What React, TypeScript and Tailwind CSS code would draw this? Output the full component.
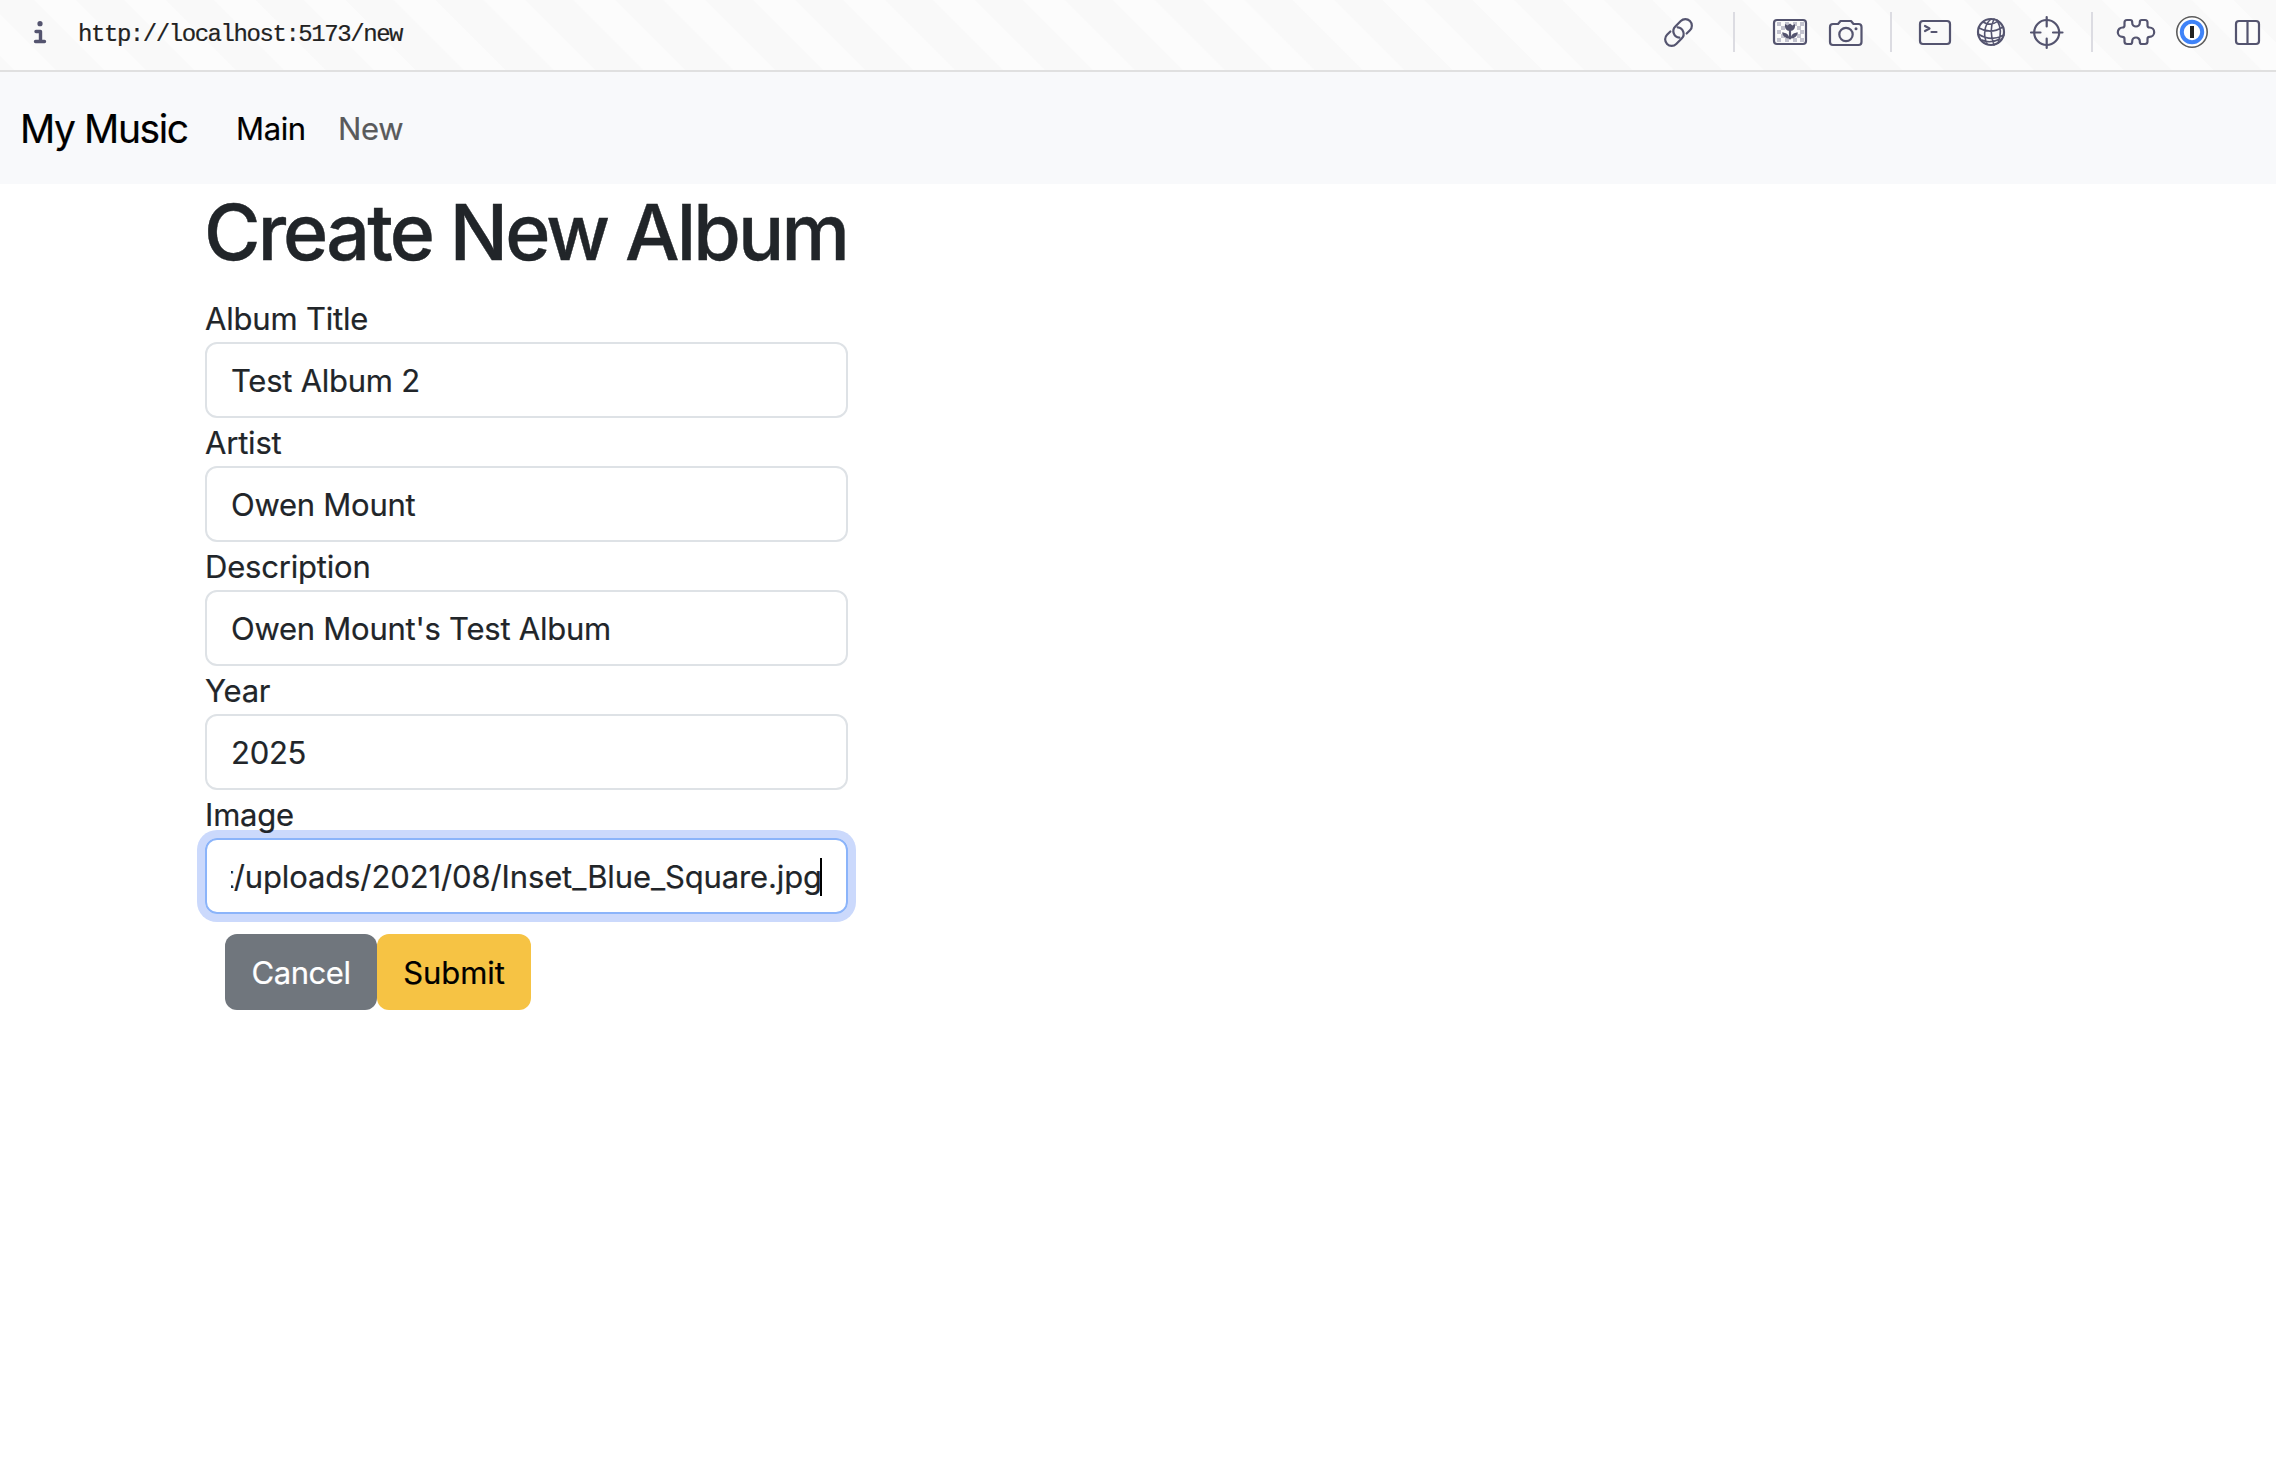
import React from "react";

const ink = "#54546f";

function Cell({ children }: { children: React.ReactNode }) {
  return (
    <svg width="56" height="70" viewBox="0 0 56 70" fill="none" stroke={ink} strokeWidth="2.2" strokeLinecap="round" strokeLinejoin="round" className="shrink-0">
      {children}
    </svg>
  );
}

const LinkIcon = () => (
  <Cell>
    <g transform="translate(28.5 32.5) rotate(-45)">
      <path d="M5 6.500H9.700A6.500 6.500 0 0 0 9.700-6.500H2A6.500 6.500 0 0 0-3 4.200" />
      <path d="M-5-6.500H-9.700A6.500 6.500 0 0 0-9.700 6.500H-2A6.500 6.500 0 0 0 3-4.200" />
    </g>
  </Cell>
);

const PictureIcon = () => (
  <Cell>
    <g fill="#c3c3cf" stroke="none">
      <path d="M15 22h4v4h-4zM23 22h4v4h-4zM31 22h4v4h-4zM38 22h4v4h-4zM19 26h4v4h-4zM35 26h4v4h-4zM15 30h4v4h-4zM38 30h4v4h-4zM19 34h4v4h-4zM35 34h4v4h-4zM15 38h4v4h-4zM23 38h4v4h-4zM31 38h4v4h-4zM38 38h4v4h-4z" />
    </g>
    <rect x="12" y="20" width="32" height="24" rx="3" />
    <path d="M23 24l2.500 1.500 2.500-2 2.500 2 2.500-1.500c.5 4-1 7-5 7s-5.500-3-5-7z" fill={ink} stroke="none" />
    <path d="M28 30v8.500" />
    <path d="M27.500 38.500c-4 0-6.500-2-7.500-6 4 0 7 2 7.500 6zM28.500 38.500c4 0 6.500-2 7.500-6-4 0-7 2-7.500 6z" fill={ink} stroke="none" />
  </Cell>
);

const CameraIcon = () => (
  <Cell>
    <path d="M15 24h5l2.500-3h10.500l2.500 3h5a3 3 0 0 1 3 3v15a3 3 0 0 1-3 3h-25.500a3 3 0 0 1-3-3v-15a3 3 0 0 1 3-3z" />
    <circle cx="28" cy="34.500" r="6.700" />
    <circle cx="38" cy="28.700" r="1.500" fill={ink} stroke="none" />
  </Cell>
);

const TerminalIcon = () => (
  <Cell>
    <rect x="13" y="21" width="30" height="23" rx="3" />
    <path d="M18 26l4.500 2.500L18 31M24.500 32h5" />
  </Cell>
);

const GlobeIcon = () => (
  <Cell>
    <circle cx="28" cy="32" r="13" />
    <path strokeWidth="1.600" d="M28 19c-7 6-8 16-4 25M31 19c-4 8-3 18 0 26M34 20c4 7 5 14 1 23M16 28c7 4 16 4 24-1M15 34c8 5 17 6 26 1M20 22c5 3 10 3 15-1M19 40c6 3 12 2 18-1" />
  </Cell>
);

const TargetIcon = () => (
  <Cell>
    <circle cx="27.700" cy="32.500" r="12.500" />
    <path d="M27.700 17v9.500M27.700 38.500v9.500M12 32.500h9.500M34 32.500h9.500" />
  </Cell>
);

const PuzzleIcon = () => (
  <Cell>
    <path d="M19 20h3.200a2 2 0 0 1 2 2v.7a3.800 3.800 0 0 0 7.600 0v-.7a2 2 0 0 1 2-2h3.200a2.500 2.500 0 0 1 2.500 2.500v3a2 2 0 0 0 2 2a4.700 4.700 0 0 1 0 9.400a2 2 0 0 0-2 2v2.600a2.500 2.500 0 0 1-2.500 2.500h-3.200a2 2 0 0 1-2-2v-.7a3.800 3.800 0 0 0-7.600 0v.7a2 2 0 0 1-2 2h-3.200a2.500 2.500 0 0 1-2.500-2.500v-2.600a2 2 0 0 0-2-2a4.700 4.700 0 0 1 0-9.400a2 2 0 0 0 2-2v-3a2.500 2.500 0 0 1 2.500-2.500z" />
  </Cell>
);

const PasswordIcon = () => (
  <Cell>
    <circle cx="28" cy="32" r="15.200" stroke="#5c5c5c" strokeWidth="1.600" fill="#fff" />
    <circle cx="28" cy="32" r="10.200" stroke="#3f83f8" strokeWidth="4" />
    <rect x="26" y="26" width="4" height="12" fill="#222" stroke="none" />
  </Cell>
);

const PanelIcon = () => (
  <Cell>
    <rect x="16" y="21" width="23" height="23" rx="3" />
    <path d="M27.500 21v23" />
  </Cell>
);

const Divider = ({ className }: { className: string }) => <div className={`h-10 w-0.5 bg-[#dcdce2] ${className}`} />;

const labelText = "h-12 text-[31px] leading-[50px] tracking-[-0.2px]";
const inputBase = "flex h-[76px] w-[643px] items-center overflow-hidden rounded-[12px] border-2 px-6 pt-0.5 text-[31px] leading-[48px]";

function Field({ label, value }: { label: string; value: string }) {
  return (
    <div>
      <div className={labelText}>{label}</div>
      <div className={`${inputBase} border-[#dee2e6] tracking-[-0.25px]`}>{value}</div>
    </div>
  );
}

export default function App() {
  return (
    <div className="h-[1476px] w-[2276px] overflow-hidden bg-white font-['Inter',sans-serif] text-[#212529] [-webkit-text-stroke:0.2px_currentColor]">
      <header className="flex h-[72px] items-start border-b-2 border-[#e0e0e0] bg-[repeating-linear-gradient(45deg,#f9f9f9_0px,#f9f9f9_9.5px,#fcfcfc_10.5px,#fcfcfc_39px,#f9f9f9_40px,#f9f9f9_63.57px)]">
        <svg width="78" height="70" viewBox="0 0 78 70" fill="none" stroke={ink} strokeWidth="3.400" strokeLinecap="round" strokeLinejoin="round" className="shrink-0">
          <path d="M36 31.500h4.500v10M35.500 41.500h9" />
          <circle cx="40" cy="23.700" r="2.600" fill={ink} stroke="none" />
        </svg>
        <div className="font-['Liberation_Mono',monospace] text-[24px] leading-[69px] tracking-[-1.44px] text-[#222]">http://localhost:5173/new</div>
        <div className="ml-auto flex items-center">
          <LinkIcon />
          <Divider className="mr-[27px] ml-[27px] -mt-1.5" />
          <PictureIcon />
          <CameraIcon />
          <Divider className="mr-[15px] ml-4 -mt-1.5" />
          <TerminalIcon />
          <GlobeIcon />
          <TargetIcon />
          <Divider className="mr-[15px] ml-4 -mt-1.5" />
          <PuzzleIcon />
          <PasswordIcon />
          <PanelIcon />
        </div>
      </header>
      <nav className="flex h-28 items-center bg-[#f8f9fb] pt-0.5 pl-5 text-black">
        <div className="w-[216px] text-[39px] leading-[60px] tracking-[-1.4px]">My Music</div>
        <div className="w-[102px] text-[31px] leading-[48px] tracking-[-0.35px]">Main</div>
        <div className="text-[31px] leading-[48px] tracking-[-0.35px] text-[#595a5b]">New</div>
      </nav>
      <main className="pl-[205px]">
        <h1 className="-ml-px h-[110px] text-[77px] leading-[96px] font-medium tracking-[-2.84px] whitespace-nowrap [-webkit-text-stroke:0.4px_currentColor]">Create New Album</h1>
        <Field label="Album Title" value="Test Album 2" />
        <Field label="Artist" value="Owen Mount" />
        <Field label="Description" value="Owen Mount's Test Album" />
        <Field label="Year" value="2025" />
        <div>
          <div className={`relative z-10 ${labelText}`}>Image</div>
          <div className={`${inputBase} border-[#8bb4fa] shadow-[0_0_0_8px_#cbd9fc]`}>
            <div className="flex w-[591px] shrink-0 items-center justify-end overflow-hidden whitespace-nowrap tracking-[-0.12px]">
              <span>t/uploads/2021/08/Inset_Blue_Square.jpg</span>
              <span className="-ml-0.5 h-[38px] w-0.5 shrink-0 bg-black" />
            </div>
          </div>
        </div>
        <div className="mt-5 ml-5 flex text-[31px] leading-[48px]">
          <div className="flex h-[76px] w-[152px] items-center justify-center rounded-[12px] bg-[#70767d] pt-0.5 tracking-[-0.45px] text-white">Cancel</div>
          <div className="flex h-[76px] w-[154px] items-center justify-center rounded-[12px] bg-[#f6c344] pt-0.5 tracking-[-0.1px] text-black">Submit</div>
        </div>
      </main>
    </div>
  );
}
